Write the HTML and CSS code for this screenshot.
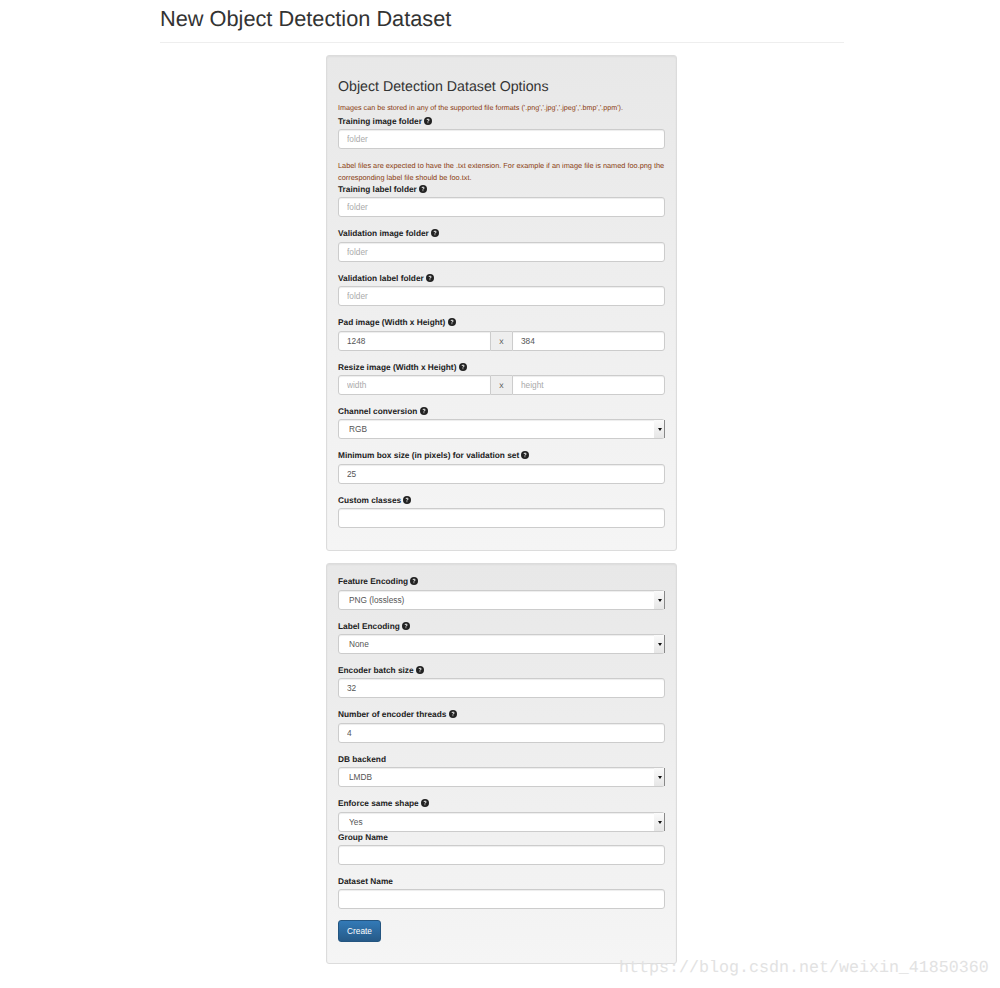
FILE: index.html
```html
<!DOCTYPE html>
<html>
<head>
    <title>New Object Detection Dataset</title>
    <link rel="stylesheet" href="styles.css">
</head>
<body>
    <svg class="defs" width="0" height="0">
        <symbol id="help" viewBox="0 0 16 16">
            <circle cx="8" cy="8" r="8" fill="#222"/>
            <path d="M5.2 6.2C5.3 4.500 6.500 3.600 8.100 3.600c1.700 0 2.800 1 2.800 2.300 0 1-.5 1.600-1.400 2.200-.7.5-.9.800-.9 1.500H7c0-1.200.3-1.800 1.200-2.400.7-.5 1-.8 1-1.300 0-.5-.4-.9-1.100-.9-.7 0-1.100.4-1.200 1.200z" fill="#eee"/>
            <rect x="7" y="10.600" width="1.700" height="1.800" fill="#eee"/>
        </symbol>
    </svg>

    <div class="container">
        <div class="page-header">
            <h1>New Object Detection Dataset</h1>
        </div>

        <form class="column">
            <div class="well">
                <h4>Object Detection Dataset Options</h4>
                <small class="help first">Images can be stored in any of the supported file formats ('.png','.jpg','.jpeg','.bmp','.ppm').</small>
                <div class="form-group">
                    <label>Training image folder <svg class="icon"><use href="#help"/></svg></label>
                    <input type="text" placeholder="folder">
                </div>
                <small class="help wide">Label files are expected to have the .txt extension. For example if an image file is named foo.png the corresponding label file should be foo.txt.</small>
                <div class="form-group">
                    <label>Training label folder <svg class="icon"><use href="#help"/></svg></label>
                    <input type="text" placeholder="folder">
                </div>
                <div class="form-group">
                    <label>Validation image folder <svg class="icon"><use href="#help"/></svg></label>
                    <input type="text" placeholder="folder">
                </div>
                <div class="form-group">
                    <label>Validation label folder <svg class="icon"><use href="#help"/></svg></label>
                    <input type="text" placeholder="folder">
                </div>
                <div class="form-group">
                    <label>Pad image (Width x Height) <svg class="icon"><use href="#help"/></svg></label>
                    <div class="input-group">
                        <input type="text" value="1248">
                        <span class="addon">x</span>
                        <input type="text" value="384">
                    </div>
                </div>
                <div class="form-group">
                    <label>Resize image (Width x Height) <svg class="icon"><use href="#help"/></svg></label>
                    <div class="input-group">
                        <input type="text" placeholder="width">
                        <span class="addon">x</span>
                        <input type="text" placeholder="height">
                    </div>
                </div>
                <div class="form-group">
                    <label>Channel conversion <svg class="icon"><use href="#help"/></svg></label>
                    <div class="select"><select><option>RGB</option></select></div>
                </div>
                <div class="form-group">
                    <label>Minimum box size (in pixels) for validation set <svg class="icon"><use href="#help"/></svg></label>
                    <input type="text" value="25">
                </div>
                <div class="form-group">
                    <label>Custom classes <svg class="icon"><use href="#help"/></svg></label>
                    <input type="text">
                </div>
            </div>

            <div class="well second">
                <div class="form-group">
                    <label>Feature Encoding <svg class="icon"><use href="#help"/></svg></label>
                    <div class="select"><select><option>PNG (lossless)</option></select></div>
                </div>
                <div class="form-group">
                    <label>Label Encoding <svg class="icon"><use href="#help"/></svg></label>
                    <div class="select"><select><option>None</option></select></div>
                </div>
                <div class="form-group">
                    <label>Encoder batch size <svg class="icon"><use href="#help"/></svg></label>
                    <input type="text" value="32">
                </div>
                <div class="form-group">
                    <label>Number of encoder threads <svg class="icon"><use href="#help"/></svg></label>
                    <input type="text" value="4">
                </div>
                <div class="form-group">
                    <label>DB backend</label>
                    <div class="select"><select><option>LMDB</option></select></div>
                </div>
                <div class="form-group tight">
                    <label>Enforce same shape <svg class="icon"><use href="#help"/></svg></label>
                    <div class="select"><select><option>Yes</option></select></div>
                </div>
                <div class="form-group">
                    <label>Group Name</label>
                    <input type="text">
                </div>
                <div class="form-group">
                    <label>Dataset Name</label>
                    <input type="text">
                </div>
                <button type="button" class="btn">Create</button>
            </div>
        </form>
    </div>

    <div class="watermark">https://blog.csdn.net/weixin_41850360</div>
</body>
</html>
```

FILE: styles.css
```css
* {
    box-sizing: border-box;
}

body {
    margin: 0;
    font-family: "Liberation Sans", Arial, sans-serif;
    font-size: 8.7px;
    color: #333;
    background-color: #fff;
    text-rendering: geometricPrecision;
}

.defs {
    position: absolute;
}

.container {
    width: 684px;
    margin-left: 160px;
}

.page-header {
    height: 43px;
    border-bottom: 1px solid #eee;
    margin-bottom: 12px;
}

h1 {
    margin: 0;
    padding-top: 5px;
    font-size: 21.75px;
    line-height: 28px;
    font-weight: 400;
}

.column {
    width: 351px;
    margin-left: 166px;
}

.well {
    padding: 11px;
    margin-bottom: 12px;
    border: 1px solid #dcdcdc;
    border-radius: 3px;
    background: linear-gradient(to bottom, #e8e8e8 0, #f5f5f5 100%);
    box-shadow: inset 0 1px 2px rgba(0, 0, 0, .05);
}

.well.second {
    padding-top: 12px;
}

h4 {
    margin: 10px 0 0;
    font-size: 14.2px;
    line-height: 20px;
    font-weight: 400;
}

.help {
    display: block;
    font-size: 7.2px;
    line-height: 12px;
    color: #8a3c10;
    margin-top: 5px;
}

.help.first {
    margin-bottom: 1.6px;
}

.help.wide {
    font-size: 7.35px;
    margin-top: 3.5px;
}

.form-group {
    margin-bottom: 11.03px;
}

.form-group.tight {
    margin-bottom: 0;
}

label {
    display: block;
    height: 13.4px;
    font-size: 8.3px;
    line-height: 10px;
    font-weight: 700;
    color: #222;
}

.icon {
    width: 8px;
    height: 8px;
    vertical-align: -1px;
}

input,
select {
    display: block;
    width: 100%;
    height: 20px;
    padding: 0 8px;
    font-family: inherit;
    font-size: 8.3px;
    color: #555;
    background-color: #fff;
    border: 1px solid #ccc;
    border-radius: 3px;
    box-shadow: inset 0 1px 1px rgba(0, 0, 0, .075);
}

input::placeholder {
    color: #aaa;
}

.input-group {
    display: flex;
    height: 20px;
}

.input-group input {
    flex: 1;
    min-width: 0;
}

.input-group input:first-child {
    border-radius: 3px 0 0 3px;
}

.input-group input:last-child {
    border-radius: 0 3px 3px 0;
}

.addon {
    width: 21px;
    flex: none;
    text-align: center;
    line-height: 18px;
    color: #555;
    background-color: #eee;
    border-top: 1px solid #ccc;
    border-bottom: 1px solid #ccc;
}

.select {
    position: relative;
}

.select select {
    appearance: none;
    padding-left: 10px;
}

.select::after {
    content: "";
    position: absolute;
    top: 1px;
    right: 0;
    width: 10px;
    height: 18px;
    border-right: 1px solid #888;
    background: linear-gradient(to bottom, #fafafa, #e6e6e6);
}

.select::before {
    content: "";
    position: absolute;
    z-index: 1;
    top: 9px;
    right: 3px;
    border-top: 3px solid #111;
    border-left: 2px solid transparent;
    border-right: 2px solid transparent;
}

.btn {
    display: block;
    width: 43px;
    height: 22px;
    margin-bottom: 10px;
    padding: 0;
    font-family: inherit;
    font-size: 8.3px;
    color: #fff;
    background: linear-gradient(to bottom, #337ab7 0, #265a88 100%);
    border: 1px solid #245580;
    border-radius: 3px;
}

.watermark {
    position: absolute;
    left: 619px;
    top: 959px;
    font-family: "Liberation Mono", monospace;
    font-size: 16.67px;
    line-height: 20px;
    color: #e2e2e2;
    white-space: nowrap;
}
```
